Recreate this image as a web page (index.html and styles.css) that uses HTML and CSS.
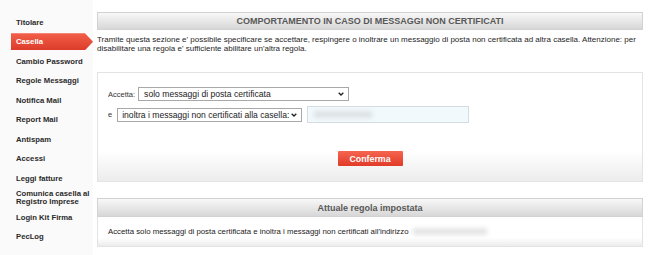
FILE: index.html
```html
<!DOCTYPE html>
<html lang="it">
<head>
<meta charset="utf-8">
<title>Casella</title>
<link rel="stylesheet" href="styles.css">
</head>
<body>
<div class="page">
  <nav class="sidebar">
    <a class="item">Titolare</a>
    <a class="item active"><span class="tab">Casella</span></a>
    <a class="item">Cambio Password</a>
    <a class="item">Regole Messaggi</a>
    <a class="item">Notifica Mail</a>
    <a class="item">Report Mail</a>
    <a class="item">Antispam</a>
    <a class="item">Accessi</a>
    <a class="item">Leggi fatture</a>
    <a class="item two">Comunica casella al<br>Registro Imprese</a>
    <a class="item">Login Kit Firma</a>
    <a class="item">PecLog</a>
  </nav>
  <main class="main">
    <div class="bar">COMPORTAMENTO IN CASO DI MESSAGGI NON CERTIFICATI</div>
    <p class="desc">Tramite questa sezione e' possibile specificare se accettare, respingere o inoltrare un messaggio di posta non certificata ad altra casella. Attenzione: per<br>disabilitare una regola e' sufficiente abilitare un'altra regola.</p>
    <div class="box form">
      <div class="row">
        <label class="lbl">Accetta:</label>
        <span class="sel sel-1">
          <select><option>solo messaggi di posta certificata</option></select>
          <svg class="chev" viewBox="0 0 6 4" width="6" height="4"><path d="M0.7 0.7 L3 3 L5.3 0.7" fill="none" stroke="#222" stroke-width="1.3"/></svg>
        </span>
      </div>
      <div class="row row-2">
        <label class="lbl lbl-e">e</label>
        <span class="sel sel-2">
          <select><option>inoltra i messaggi non certificati alla casella:</option></select>
          <svg class="chev" viewBox="0 0 6 4" width="6" height="4"><path d="M0.7 0.7 L3 3 L5.3 0.7" fill="none" stroke="#222" stroke-width="1.3"/></svg>
        </span>
        <span class="field"><span class="smudge"></span></span>
      </div>
      <div class="actions"><button class="btn">Conferma</button></div>
    </div>
    <div class="bar bar-2">Attuale regola impostata</div>
    <div class="box info">Accetta solo messaggi di posta certificata e inoltra i messaggi non certificati all'indirizzo<span class="smudge email"></span></div>
  </main>
</div>
</body>
</html>
```
FILE: styles.css
```css
html, body {
  margin: 0;
  padding: 0;
  background: #ffffff;
}
body {
  font-family: "Liberation Sans", Arial, sans-serif;
  color: #222;
}
.page {
  display: flex;
  height: 255px;
  overflow: hidden;
}
.sidebar {
  width: 93px;
  flex: none;
  background: #fafafa;
  padding-top: 12.5px;
  display: flex;
  flex-direction: column;
}
.item {
  height: 19.5px;
  display: flex;
  align-items: center;
  padding-left: 16px;
  font-size: 7.7px;
  font-weight: bold;
  color: #2a2a2a;
  white-space: nowrap;
}
.item.two {
  line-height: 7.5px;
}
.item.active {
  padding-left: 11px;
}
.tab {
  display: flex;
  align-items: center;
  height: 17px;
  width: 82px;
  padding-left: 5px;
  box-sizing: border-box;
  color: #fff;
  background: linear-gradient(#f2604a, #dd3c2b);
  clip-path: polygon(0 0, 74px 0, 100% 50%, 74px 100%, 0 100%);
}
.main {
  flex: 1;
  min-width: 0;
  padding: 12px 7px 0 4px;
}
.bar {
  height: 18px;
  box-sizing: border-box;
  border: 1px solid #d2d2d2;
  background: linear-gradient(#f8f8f8, #d7d7d7);
  display: flex;
  align-items: center;
  justify-content: center;
  font-size: 9px;
  font-weight: bold;
  color: #585858;
}
.desc {
  margin: 6px 0 0;
  font-size: 8px;
  line-height: 8.5px;
  color: #262626;
  white-space: nowrap;
}
.box {
  box-sizing: border-box;
  border: 1px solid #e3e3e3;
  background: linear-gradient(#ffffff 72%, #ececec);
}
.form {
  margin-top: 19px;
  height: 110px;
  padding: 14px 10px 0;
}
.row {
  display: flex;
  align-items: center;
  height: 14px;
}
.row-2 {
  height: 17px;
  margin-top: 5px;
}
.lbl {
  font-size: 7.5px;
  color: #333;
  margin-right: 3px;
}
.lbl-e {
  margin-right: 5px;
}
.sel {
  position: relative;
  display: flex;
}
.sel select {
  appearance: none;
  -webkit-appearance: none;
  height: 14px;
  box-sizing: border-box;
  border: 1px solid #a8a8a8;
  border-radius: 0;
  background: #fff;
  padding: 0 0 0 5px;
  margin: 0;
  font-family: "Liberation Sans", Arial, sans-serif;
  font-size: 8.6px;
  color: #222;
}
.sel-1 select {
  width: 211px;
}
.sel-2 select {
  width: 185px;
  padding-left: 4px;
}
.chev {
  position: absolute;
  right: 5px;
  top: 5px;
}
.field {
  display: block;
  margin-left: 5px;
  width: 162px;
  height: 17px;
  box-sizing: border-box;
  border: 1px solid #d4dde2;
  background: #f2f9fc;
  padding: 4px 0 0 6px;
}
.field .smudge {
  display: block;
  width: 58px;
  height: 7px;
  background: #dde2e5;
  filter: blur(2px);
}
.actions {
  display: flex;
  justify-content: center;
  margin-top: 28px;
}
.btn {
  width: 65px;
  height: 15px;
  border: none;
  border-radius: 1px;
  padding: 0;
  background: linear-gradient(#f6654f, #e03b29);
  color: #fff;
  font-family: "Liberation Sans", Arial, sans-serif;
  font-weight: bold;
  font-size: 8.8px;
}
.bar-2 {
  margin-top: 16px;
  height: 19px;
}
.info {
  height: 30px;
  border-top: none;
  display: flex;
  align-items: center;
  padding-left: 10px;
  font-size: 7.8px;
  color: #222;
  white-space: nowrap;
}
.email {
  display: inline-block;
  width: 74px;
  height: 7px;
  margin-left: 4px;
  background: #e5e5e5;
  filter: blur(2px);
}
```
